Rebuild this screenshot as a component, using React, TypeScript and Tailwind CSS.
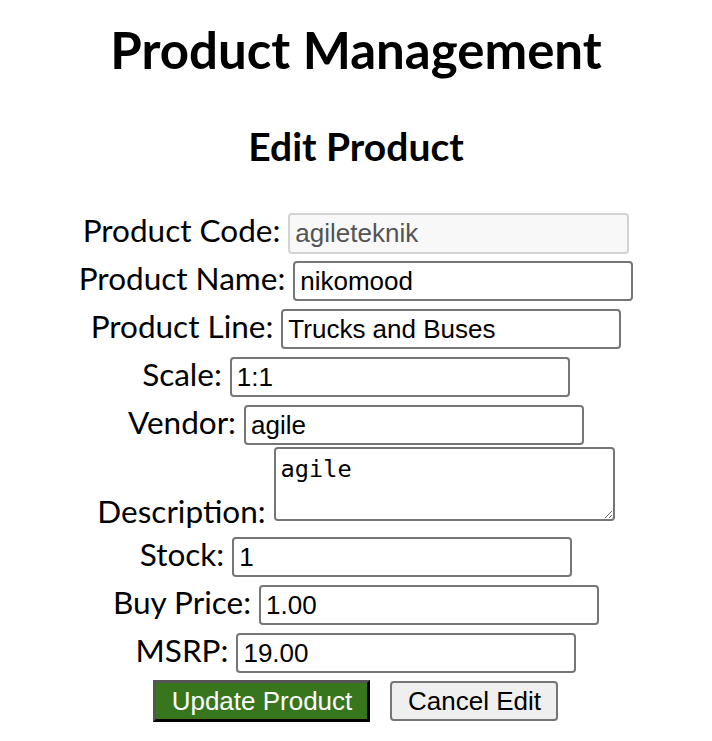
import React from "react";

const inputCls =
  "w-[340px] h-[40px] border-2 border-[#767676] rounded-[4px] bg-white pl-[5px] pr-[5px] text-[26px] text-black font-['Liberation_Sans',Arial,sans-serif] outline-none";

const labelCls = "text-[31.5px] leading-[31px] pb-[6px]";

function Row({ label, value }: { label: string; value: string }) {
  return (
    <div className="h-[48px] flex items-center justify-center gap-[8px]">
      <label className={labelCls}>{label}</label>
      <input className={inputCls} defaultValue={value} />
    </div>
  );
}

export default function App() {
  return (
    <div className="w-full min-h-[741px] bg-white text-black font-['Lato',sans-serif] flex flex-col items-center">
      <h1 className="mt-[20px] text-[51px] leading-[60px] font-bold">Product Management</h1>
      <h2 className="mt-[42px] text-[39px] leading-[48px] font-bold">Edit Product</h2>
      <form className="mt-[39px] flex flex-col items-center" onSubmit={(e) => e.preventDefault()}>
        <div className="h-[48px] flex items-center justify-center gap-[8px]">
          <label className={labelCls}>Product Code:</label>
          <input
            className="w-[341px] h-[41px] border-2 border-[#d3d3d3] rounded-[4px] bg-[#f8f8f8] pl-[5px] pr-[5px] text-[26px] text-[#545454] font-['Liberation_Sans',Arial,sans-serif] outline-none"
            defaultValue="agileteknik"
            disabled
          />
        </div>
        <Row label="Product Name:" value="nikomood" />
        <Row label="Product Line:" value="Trucks and Buses" />
        <Row label="Scale:" value="1:1" />
        <Row label="Vendor:" value="agile" />
        <div className="h-[84px] flex items-end justify-center gap-[8px] pb-[12px]">
          <label className="text-[31.5px] leading-[31px] mb-[-6px]">Description:</label>
          <textarea
            className="w-[341px] h-[74px] border-2 border-[#767676] rounded-[4px] bg-white pl-[5px] pt-[6px] text-[23.6px] leading-[1.2] text-black font-['DejaVu_Sans_Mono',monospace] outline-none block"
            defaultValue="agile"
          />
        </div>
        <Row label="Stock:" value="1" />
        <Row label="Buy Price:" value="1.00" />
        <Row label="MSRP:" value="19.00" />
        <div className="h-[48px] flex items-center justify-center gap-[20px]">
          <button
            type="submit"
            className="w-[217px] h-[42px] bg-[#38761d] text-white text-[26px] font-['Liberation_Sans',Arial,sans-serif] border-[3px] border-t-[#555555] border-l-[#555555] border-b-black border-r-black flex items-center justify-center"
          >
            Update Product
          </button>
          <button
            type="button"
            className="w-[168px] h-[40px] bg-[#efefef] text-black text-[26px] font-['Liberation_Sans',Arial,sans-serif] border-2 border-[#767676] rounded-[4px] flex items-center justify-center"
          >
            Cancel Edit
          </button>
        </div>
      </form>
    </div>
  );
}
